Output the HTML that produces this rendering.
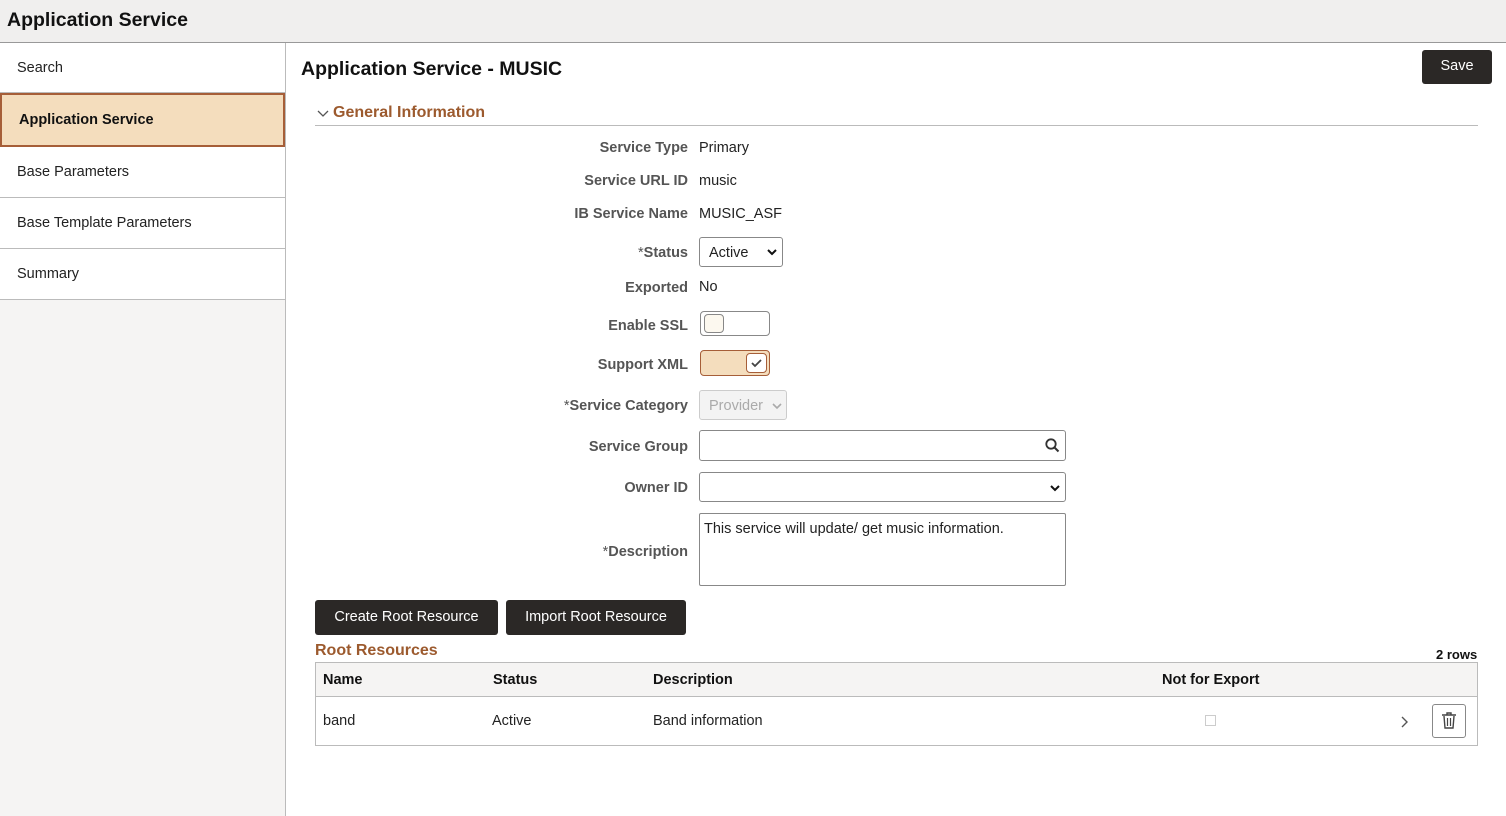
<!DOCTYPE html>
<html><head><meta charset="utf-8"><style>
*{box-sizing:border-box;margin:0;padding:0}
body{width:1506px;height:816px;position:relative;font-family:"Liberation Sans",Arial,sans-serif;color:#222;background:#fff;overflow:hidden;font-size:14.5px}
.a{position:absolute}
.hdr{left:0;top:0;width:1506px;height:43px;background:#f0efee;border-bottom:1px solid #999}
.hdr span{position:absolute;left:7px;top:9px;font-size:19.5px;font-weight:bold;color:#111}
.nav{left:0;top:43px;width:286px;height:773px;background:#f5f4f3;border-right:1px solid #bbb}
.ni{position:absolute;left:0;width:285px;background:#fff;border-bottom:1px solid #bbb;font-size:14.5px;color:#222;padding-left:17px}
.lbl{position:absolute;right:818px;font-weight:bold;color:#555;font-size:14.5px;text-align:right;white-space:nowrap}
.val{position:absolute;left:699px;font-size:14.5px;color:#222}
.btn{position:absolute;background:#2b2826;color:#fff;border-radius:3px;font-size:14.5px;text-align:center}
.box{position:absolute;border:1px solid #888;border-radius:3px;background:#fff}
.th{position:absolute;top:672px;font-weight:bold;font-size:14.5px;color:#111}
.td{position:absolute;top:713px;font-size:14.5px;color:#222}
</style></head><body>
<div class="a hdr"><span>Application Service</span></div>
<div class="a nav">
<div class="ni" style="top:0;height:50px;line-height:50px">Search</div>
<div class="ni" style="top:50px;height:54px;line-height:51px;background:#f4ddbd;border:2px solid #a65e38;font-weight:bold;color:#111;padding-left:17px">Application Service</div>
<div class="ni" style="top:104px;height:51px;line-height:51px">Base Parameters</div>
<div class="ni" style="top:155px;height:51px;line-height:51px">Base Template Parameters</div>
<div class="ni" style="top:206px;height:51px;line-height:51px">Summary</div>
</div>
<div class="a" style="left:301px;top:58px;font-size:19.5px;font-weight:bold;color:#111">Application Service - MUSIC</div>
<div class="btn" style="left:1422px;top:50px;width:70px;height:34px;line-height:33px">Save</div>
<svg class="a" style="left:317px;top:109px" width="12" height="10"><path d="M1 2 L6 7 L11 2" stroke="#555" fill="none" stroke-width="1.3"/></svg>
<div class="a" style="left:333px;top:104px;font-size:16px;font-weight:bold;color:#9c5a2e">General Information</div>
<div class="a" style="left:315px;top:125px;width:1163px;height:1px;background:#bbb"></div>

<div class="lbl" style="top:140px">Service Type</div><div class="val" style="top:140px">Primary</div>
<div class="lbl" style="top:173px">Service URL ID</div><div class="val" style="top:173px">music</div>
<div class="lbl" style="top:206px">IB Service Name</div><div class="val" style="top:206px">MUSIC_ASF</div>
<div class="lbl" style="top:245px"><span style="font-weight:normal">*</span>Status</div>
<div class="box" style="left:699px;top:237px;width:84px;height:30px"><span class="a" style="left:9px;top:7px">Active</span>
<svg class="a" style="left:67px;top:10px" width="10" height="8"><path d="M1 2 L5 6 L9 2" stroke="#111" fill="none" stroke-width="2"/></svg></div>
<div class="lbl" style="top:280px">Exported</div><div class="val" style="top:279px">No</div>
<div class="lbl" style="top:318px">Enable SSL</div>
<div class="box" style="left:700px;top:311px;width:70px;height:25px;border-radius:4px"><div class="a" style="left:3px;top:2px;width:20px;height:19px;border:1px solid #888;border-radius:4px;background:#fcf8ef"></div></div>
<div class="lbl" style="top:357px">Support XML</div>
<div class="box" style="left:700px;top:350px;width:70px;height:26px;border-radius:4px;background:#f4ddbd;border-color:#a65e38"><div class="a" style="left:45px;top:2px;width:21px;height:20px;border:1px solid #a65e38;border-radius:4px;background:#fff"></div>
<svg class="a" style="left:50px;top:7px" width="12" height="10"><path d="M1 5 L4 8 L10 2" stroke="#444" fill="none" stroke-width="1.8"/></svg></div>
<div class="lbl" style="top:398px"><span style="font-weight:normal">*</span>Service Category</div>
<div class="box" style="left:699px;top:390px;width:88px;height:30px;background:#f3f3f3;border-color:#ccc"><span class="a" style="left:9px;top:7px;color:#aaa">Provider</span>
<svg class="a" style="left:72px;top:11px" width="10" height="8"><path d="M1 2 L5 6 L9 2" stroke="#aaa" fill="none" stroke-width="1.6"/></svg></div>
<div class="lbl" style="top:439px">Service Group</div>
<div class="box" style="left:699px;top:430px;width:367px;height:31px"><svg class="a" style="left:345px;top:7px" width="15" height="15"><circle cx="6" cy="6" r="4.7" stroke="#333" stroke-width="1.8" fill="none"/><path d="M9.5 9.5 L13.5 13.5" stroke="#333" stroke-width="2"/></svg></div>
<div class="lbl" style="top:480px">Owner ID</div>
<div class="box" style="left:699px;top:472px;width:367px;height:30px"><svg class="a" style="left:350px;top:11px" width="10" height="8"><path d="M1 2 L5 6 L9 2" stroke="#111" fill="none" stroke-width="2"/></svg></div>
<div class="lbl" style="top:544px"><span style="font-weight:normal">*</span>Description</div>
<div class="box" style="left:699px;top:513px;width:367px;height:73px;border-radius:2px"><span class="a" style="left:4px;top:7px">This service will update/ get music information.</span></div>

<div class="btn" style="left:315px;top:600px;width:183px;height:35px;line-height:35px">Create Root Resource</div>
<div class="btn" style="left:506px;top:600px;width:180px;height:35px;line-height:35px">Import Root Resource</div>
<div class="a" style="left:315px;top:642px;font-size:16px;font-weight:bold;color:#9c5a2e">Root Resources</div>
<div class="a" style="left:1436px;top:647px;font-size:13px;font-weight:bold;color:#111">2 rows</div>
<div class="a" style="left:315px;top:662px;width:1163px;height:35px;background:#f5f4f3;border:1px solid #bbb"></div>
<div class="a" style="left:315px;top:696px;width:1163px;height:50px;background:#fff;border:1px solid #bbb"></div>
<div class="th" style="left:323px">Name</div><div class="th" style="left:493px">Status</div><div class="th" style="left:653px">Description</div><div class="th" style="left:1162px">Not for Export</div>
<div class="td" style="left:323px">band</div><div class="td" style="left:492px">Active</div><div class="td" style="left:653px">Band information</div>
<div class="a" style="left:1205px;top:715px;width:11px;height:11px;border:1px solid #ccc"></div>
<svg class="a" style="left:1400px;top:715px" width="10" height="14"><path d="M2 2 L7 7 L2 12" stroke="#555" fill="none" stroke-width="1.4"/></svg>
<div class="a" style="left:1432px;top:704px;width:34px;height:34px;border:1px solid #888;border-radius:3px"></div>
<svg class="a" style="left:1441px;top:712px" width="16" height="17"><path d="M1 3 H15 M6 3 V1 H10 V3" stroke="#444" fill="none" stroke-width="1.4"/><path d="M3 4 L4 16 H12 L13 4" stroke="#444" fill="none" stroke-width="1.4"/><path d="M6.5 6 V14 M9.5 6 V14" stroke="#444" stroke-width="1.2"/></svg>
</body></html>
